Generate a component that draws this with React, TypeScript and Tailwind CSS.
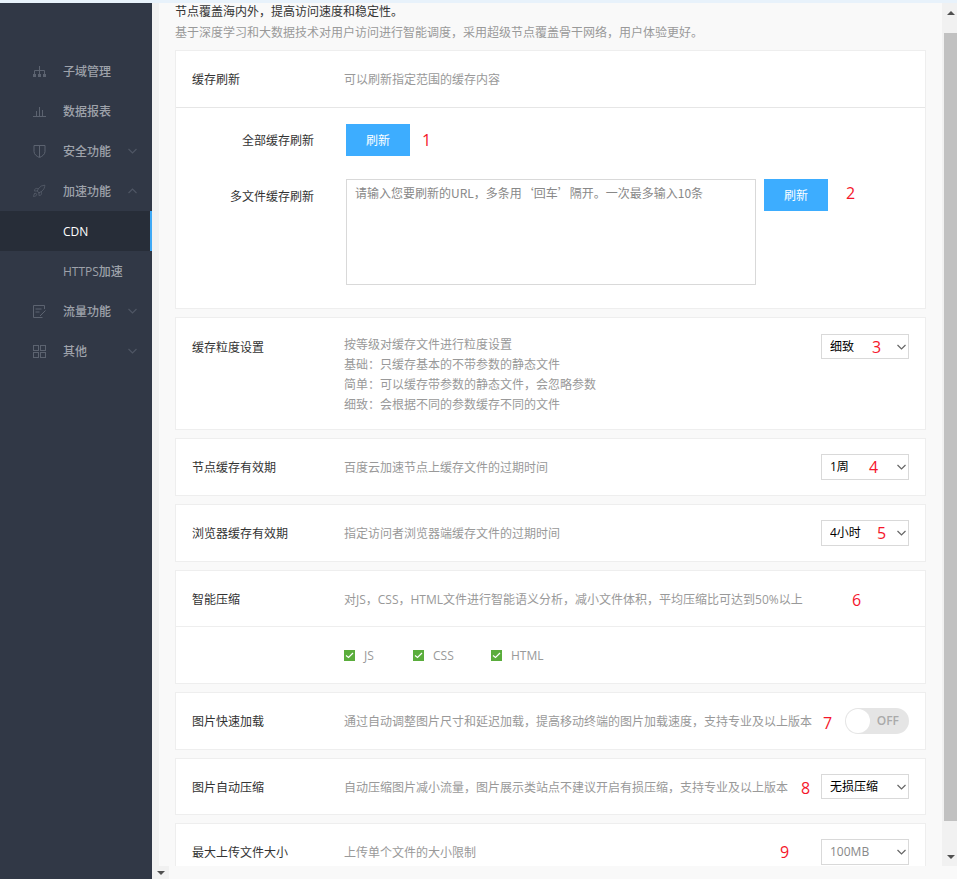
import { ReactNode } from "react";
import { Rocket } from "lucide-react";

const FONT = "[font-family:'Open_Sans','Noto_Sans_CJK_SC',sans-serif]";

function Chevron({ up, className }: { up?: boolean; className: string }) {
  return (
    <svg width="9" height="6" viewBox="0 0 9 6" fill="none" className={className}>
      <path
        d={up ? "M0.5 5L4.5 1L8.5 5" : "M0.5 1L4.5 5L8.5 1"}
        stroke="currentColor"
        strokeWidth="1.2"
      />
    </svg>
  );
}

function SiteIcon() {
  return (
    <svg width="13" height="13" viewBox="0 0 13 13" fill="none" stroke="currentColor">
      <path d="M6.5 1V9M1.5 9V5.5H11.5V9" />
      <rect x="0" y="9" width="3" height="3" fill="currentColor" stroke="none" />
      <rect x="5" y="9" width="3" height="3" fill="currentColor" stroke="none" />
      <rect x="10" y="9" width="3" height="3" fill="currentColor" stroke="none" />
    </svg>
  );
}

function ChartIcon() {
  return (
    <svg width="13" height="13" viewBox="0 0 13 13" fill="none" stroke="currentColor">
      <path d="M0 11.5H13M3.5 6V11M6.5 2V11M9.5 5V11" />
    </svg>
  );
}

function ShieldIcon() {
  return (
    <svg width="13" height="14" viewBox="0 0 13 14" fill="none" stroke="currentColor">
      <path d="M1 1.5H12V7.5C12 10.5 9 12.5 6.5 13.5C4 12.5 1 10.5 1 7.5Z" />
      <path d="M6.5 1.5V13" />
    </svg>
  );
}

function EditIcon() {
  return (
    <svg width="13" height="13" viewBox="0 0 13 13" fill="none" stroke="currentColor">
      <path d="M9.5 12.5H0.5V0.5H11.5V4M2.5 4H8.5M2.5 7H6.5M7 11L12.5 5.5" />
    </svg>
  );
}

function GridIcon() {
  return (
    <svg width="13" height="13" viewBox="0 0 13 13" fill="none" stroke="currentColor">
      <rect x="0.5" y="0.5" width="5" height="5" />
      <rect x="7.5" y="0.5" width="5" height="5" />
      <rect x="0.5" y="7.5" width="5" height="5" />
      <rect x="7.5" y="7.5" width="5" height="5" />
    </svg>
  );
}

function NavItem({
  icon,
  label,
  chevron,
  active,
}: {
  icon?: ReactNode;
  label: string;
  chevron?: "up" | "down";
  active?: boolean;
}) {
  return (
    <div
      className={`flex h-10 items-center text-xs font-medium ${
        active
          ? "border-r-2 border-[#3fa9f5] bg-[#272d38] text-white"
          : "text-[#9ea2aa]"
      }`}
    >
      <span className="flex w-[63px] justify-end pr-[17px] text-[#5c6370]">{icon}</span>
      <span className="flex-1 pt-[2px]">{label}</span>
      {chevron && (
        <Chevron up={chevron === "up"} className="mr-[15px] text-[#4f5664]" />
      )}
    </div>
  );
}

function Mark({ n, className }: { n: number; className: string }) {
  return (
    <span
      className={`pointer-events-none absolute text-base leading-5 text-[#f5162b] ${className}`}
    >
      {n}
    </span>
  );
}

function Picker({
  value,
  muted,
  wide,
}: {
  value: string;
  muted?: boolean;
  wide?: boolean;
}) {
  return (
    <div className={`relative w-[88px] shrink-0 ${wide ? "h-[26px]" : "h-[25px]"}`}>
      <select
        defaultValue={value}
        className={`h-full w-full appearance-none border border-[#d9d9d9] bg-white pl-2 text-xs outline-none ${
          muted ? "text-[#888]" : "text-black"
        }`}
      >
        <option>{value}</option>
      </select>
      <Chevron up={false} className="absolute right-[3px] top-[10px] text-[#666]" />
    </div>
  );
}

function Row({
  label,
  children,
  desc,
  className,
}: {
  label: string;
  desc: ReactNode;
  children?: ReactNode;
  className?: string;
}) {
  return (
    <div className={`flex items-center pl-4 pr-4 text-xs ${className ?? "h-14"}`}>
      <span className="w-[152px] shrink-0 pt-[2px] text-[#333]">{label}</span>
      <span className="flex-1 whitespace-nowrap pt-[2px] text-[#999]">{desc}</span>
      {children}
    </div>
  );
}

function Card({ children }: { children: ReactNode }) {
  return <section className="relative border border-[#eeeeee] bg-white">{children}</section>;
}

function Check({ label, className }: { label: string; className?: string }) {
  return (
    <label className={`flex items-center gap-[9px] text-xs text-[#999] ${className ?? ""}`}>
      <span className="flex h-[11px] w-[11px] items-center justify-center bg-[#5aad3c]">
        <svg width="9" height="7" viewBox="0 0 9 7" fill="none">
          <path d="M1 3.5L3.5 5.5L8 1" stroke="white" strokeWidth="1.2" />
        </svg>
      </span>
      <span className="pt-[2px]">{label}</span>
    </label>
  );
}

function BlueButton() {
  return (
    <button className="h-8 w-16 shrink-0 bg-[#3dadff] pt-[2px] text-xs text-white">刷新</button>
  );
}

function Triangle({ up }: { up?: boolean }) {
  return (
    <svg width="8" height="4" viewBox="0 0 8 4" className="text-[#505050]">
      <path d={up ? "M0 4L4 0L8 4Z" : "M0 0L8 0L4 4Z"} fill="currentColor" />
    </svg>
  );
}

export default function App() {
  return (
    <div className={`flex h-[879px] w-[957px] flex-col overflow-hidden bg-[#f9f9f9] ${FONT}`}>
      <div className="h-[3px] shrink-0 bg-[#e8f2fb]" />
      <div className="flex min-h-0 flex-1">
        <aside className="w-[152px] shrink-0 bg-[#313846] pt-12">
          <NavItem icon={<SiteIcon />} label="子域管理" />
          <NavItem icon={<ChartIcon />} label="数据报表" />
          <NavItem icon={<ShieldIcon />} label="安全功能" chevron="down" />
          <NavItem icon={<Rocket size={14} strokeWidth={1.2} />} label="加速功能" chevron="up" />
          <NavItem label="CDN" active />
          <NavItem label="HTTPS加速" />
          <NavItem icon={<EditIcon />} label="流量功能" chevron="down" />
          <NavItem icon={<GridIcon />} label="其他" chevron="down" />
        </aside>

        <div className="flex min-w-0 flex-1 flex-col">
          <div className="flex min-h-0 flex-1">
            <div className="w-[7px] shrink-0 bg-[#f1f1f1]" />
            <main className="min-w-0 flex-1 overflow-hidden pl-4 pr-4 text-xs">
              <p className="leading-[18px] text-[#333]">节点覆盖海内外&#xFF0C;提高访问速度和稳定性。</p>
              <p className="mb-[5px] leading-6 text-[#999]">
                基于深度学习和大数据技术对用户访问进行智能调度&#xFF0C;采用超级节点覆盖骨干网络&#xFF0C;用户体验更好。
              </p>

              <div className="flex flex-col gap-2">
                <Card>
                  <Row label="缓存刷新" desc="可以刷新指定范围的缓存内容" />
                  <div className="h-[201px] border-t border-[#e6e6e6] pt-4">
                    <div className="flex items-center">
                      <span className="w-[138px] pt-[2px] text-right text-[#333]">全部缓存刷新</span>
                      <div className="ml-8 flex items-center">
                        <BlueButton />
                        <span className="ml-3 text-base text-[#f5162b]">1</span>
                      </div>
                    </div>
                    <div className="mt-[23px] flex items-start">
                      <span className="mt-[9px] w-[138px] text-right leading-[18px] text-[#333]">
                        多文件缓存刷新
                      </span>
                      <textarea
                        readOnly
                        placeholder="请输入您要刷新的URL&#xFF0C;多条用&#x2018;回车&#x2019;隔开。一次最多输入10条"
                        className="ml-8 h-[106px] w-[410px] resize-none border border-[#d9d9d9] px-2 py-1 text-xs leading-[18px] outline-none [font-family:'Noto_Sans_CJK_SC',sans-serif] placeholder:text-[#888]"
                      />
                      <div className="ml-2">
                        <BlueButton />
                      </div>
                      <span className="ml-[18px] text-base leading-7 text-[#f5162b]">2</span>
                    </div>
                  </div>
                </Card>

                <Card>
                  <div className="flex h-[111px] items-start pl-4 pr-4 pt-4 text-xs">
                    <span className="mt-[6px] w-[152px] shrink-0 text-[#333]">缓存粒度设置</span>
                    <div className="flex-1 pt-px leading-5 text-[#999]">
                      <p>按等级对缓存文件进行粒度设置</p>
                      <p>基础&#xFF1A;只缓存基本的不带参数的静态文件</p>
                      <p>简单&#xFF1A;可以缓存带参数的静态文件&#xFF0C;会忽略参数</p>
                      <p>细致&#xFF1A;会根据不同的参数缓存不同的文件</p>
                    </div>
                    <Picker value="细致" />
                  </div>
                  <Mark n={3} className="left-[696px] top-[19px]" />
                </Card>

                <Card>
                  <Row label="节点缓存有效期" desc="百度云加速节点上缓存文件的过期时间">
                    <Picker value="1周" wide />
                  </Row>
                  <Mark n={4} className="left-[693px] top-[18px]" />
                </Card>

                <Card>
                  <Row label="浏览器缓存有效期" desc="指定访问者浏览器端缓存文件的过期时间">
                    <Picker value="4小时" wide />
                  </Row>
                  <Mark n={5} className="left-[701px] top-[18px]" />
                </Card>

                <Card>
                  <Row
                    label="智能压缩"
                    desc="对JS&#xFF0C;CSS&#xFF0C;HTML文件进行智能语义分析&#xFF0C;减小文件体积&#xFF0C;平均压缩比可达到50%以上"
                    className="h-[55px]"
                  />
                  <Mark n={6} className="left-[676px] top-[19px]" />
                  <div className="flex h-[57px] items-center border-t border-[#eeeeee] pl-[168px]">
                    <Check label="JS" className="w-[69px]" />
                    <Check label="CSS" className="w-[78px]" />
                    <Check label="HTML" />
                  </div>
                </Card>

                <Card>
                  <Row
                    label="图片快速加载"
                    desc="通过自动调整图片尺寸和延迟加载&#xFF0C;提高移动终端的图片加载速度&#xFF0C;支持专业及以上版本"
                  >
                    <div className="relative flex h-[26px] w-16 shrink-0 items-center justify-end rounded-full bg-[#e5e5e5] pr-[10px] text-xs font-semibold text-[#aaa]">
                      OFF
                      <span className="absolute left-[1px] top-[1px] h-6 w-6 rounded-full bg-white" />
                    </div>
                  </Row>
                  <Mark n={7} className="left-[647px] top-[20px]" />
                </Card>

                <Card>
                  <Row
                    label="图片自动压缩"
                    desc="自动压缩图片减小流量&#xFF0C;图片展示类站点不建议开启有损压缩&#xFF0C;支持专业及以上版本"
                    className="h-[55px]"
                  >
                    <Picker value="无损压缩" />
                  </Row>
                  <Mark n={8} className="left-[625px] top-[19px]" />
                </Card>

                <Card>
                  <Row label="最大上传文件大小" desc="上传单个文件的大小限制">
                    <Picker value="100MB" muted wide />
                  </Row>
                  <Mark n={9} className="left-[604px] top-[18px]" />
                </Card>
              </div>
            </main>

            <div className="flex w-[15px] shrink-0 flex-col bg-[#f1f1f1]">
              <div className="flex h-[30px] shrink-0 items-start justify-center pl-[2px] pt-[8px]">
                <Triangle up />
              </div>
              <div className="ml-[2px] flex-1 bg-[#c1c1c1]" />
              <div className="flex h-[45px] shrink-0 items-end justify-center pl-[2px] pb-[7px]">
                <Triangle />
              </div>
            </div>
          </div>

          <div className="flex h-[13px] shrink-0">
            <div className="flex w-[17px] items-center justify-center bg-[#f1f1f1]">
              <Triangle />
            </div>
          </div>
        </div>
      </div>
    </div>
  );
}
